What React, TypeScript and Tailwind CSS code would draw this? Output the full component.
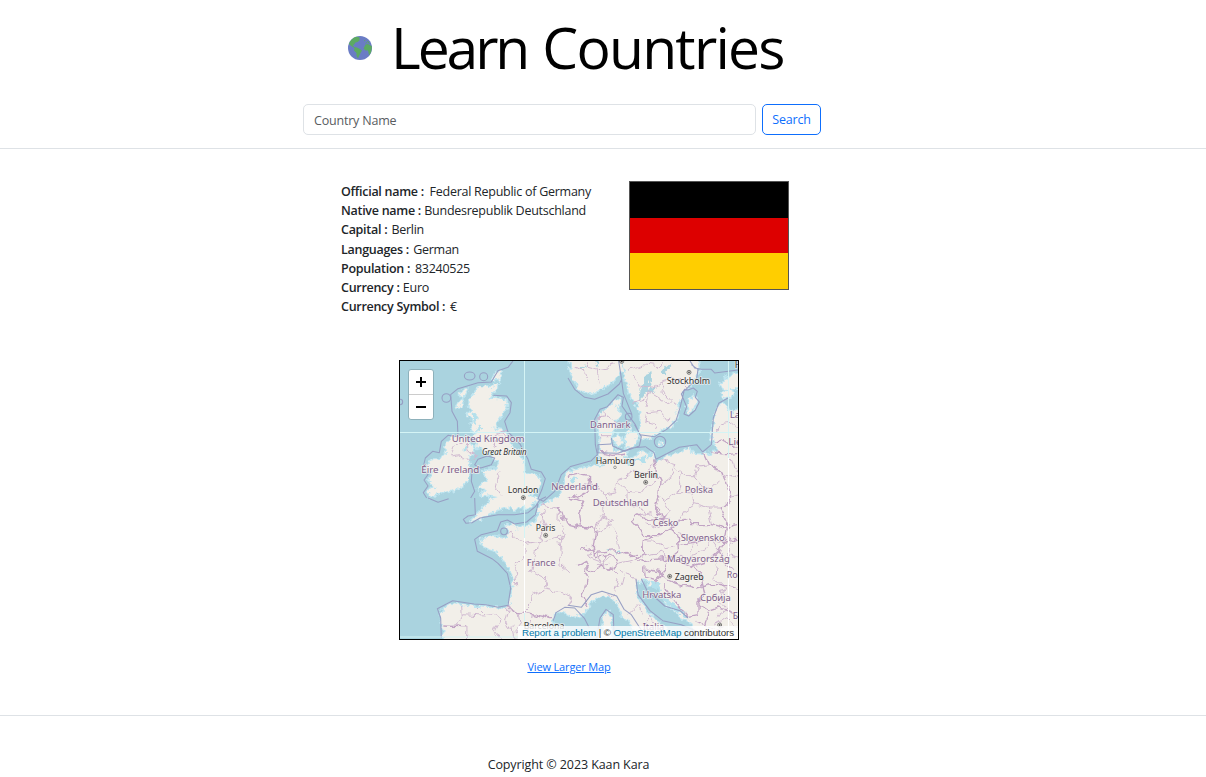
import React from "react";

const facts: [string, string, string][] = [
  ["Official name :", "Federal Republic of Germany", "w-[250px]"],
  ["Native name :", "Bundesrepublik Deutschland", "w-[245px]"],
  ["Capital :", "Berlin", "w-[83px]"],
  ["Languages :", "German", "w-[118px]"],
  ["Population :", "83240525", "w-[129px]"],
  ["Currency :", "Euro", "w-[88px]"],
  ["Currency Symbol :", "€", "w-[116px]"],
];

function Globe() {
  return (
    <svg viewBox="0 0 24 24" className="h-6 w-6 shrink-0">
      <circle cx="12" cy="12" r="12" fill="#6a7cc5" />
      <path
        fill="#5caa62"
        d="M.8 8Q3 2.500 8 .8L11.500 1.200L11.500 4.500L9.500 6L7.500 6.500L6.200 8.500L5 9L6 11L9 11.500L12 13L14 14.500L12.500 17L11 20L10 22.500L8.500 20L8.500 17L6 14.500L6.500 12L4 10.500L2 9ZM17.500 8.500L20 8L21.500 9L23.700 10Q24.500 15 21.200 19.500L20.500 17L20 14.500L17.500 14.500L15.500 12.500ZM19 5L20.500 5.500L22 8L20 7Z"
      />
      <path stroke="#5caa62" strokeWidth=".8" fill="none" d="M16 5L17.500 4M17.500 7.300L19 6.500" />
    </svg>
  );
}

const land = [
  // Great Britain
  "M242 84L268 88L300 78L290 98L270 125L292 122L326 128L326 148L310 172L288 204L286 212L312 216L325 235L338 262L360 285L378 318L380 348L420 352L427 374L412 398L390 414L418 420L410 435L395 448L350 452L325 448L290 458L260 475L235 488L215 492L240 468L265 440L280 424L302 418L275 412L248 414L264 396L240 394L252 378L270 370L262 350L250 342L272 332L298 332L304 312L285 298L290 280L262 285L250 266L235 270L238 248L228 236L240 215L222 222L218 196L224 180L208 172L225 152L208 135L226 112Z",
  "M183 108L208 88L206 100L194 118ZM174 150L196 120L188 144ZM284 66L294 42L308 44L300 66Z",
  // Ireland
  "M162 240L200 236L216 262L228 272L222 292L212 300L214 330L208 368L180 392L130 404L98 418L86 404L110 385L94 366L108 345L86 335L96 310L130 302L144 288L142 262Z",
  // Continent
  "M606 272L604 230L600 186L608 166L630 150L665 118L656 150L668 170L652 190L652 215L636 235L640 262L654 278L684 284L696 304L738 278L748 290L768 286L766 318L800 298L852 284L872 270L890 288L922 290L960 282L956 262L940 248L948 190L954 160L976 132L996 165L1030 150L1030 850L904 850L880 796L840 770L800 735L780 675L750 685L758 664L730 668L712 678L716 710L750 766L790 800L840 850L745 850L700 800L672 772L658 732L640 720L612 712L584 726L560 764L528 776L494 758L468 768L464 795L410 850L138 850L136 810L124 765L160 736L200 742L260 746L320 750L334 744L342 700L346 655L330 626L312 596L290 578L260 568L246 546L290 534L322 540L332 528L328 500L345 498L352 512L390 506L416 488L424 446L450 430L482 420L494 394L506 360L510 342L560 330L606 318Z",
  // Scandinavia
  "M514 0L520 48L540 90L568 108L602 98L640 72L670 42L678 12L680 54L696 108L722 150L728 186L724 218L728 240L762 242L778 218L812 208L832 190L840 138L858 95L884 74L902 42L900 0Z",
  "M684 266L680 238L696 214L718 224L714 254L696 270ZM644 242L660 230L676 250L662 266ZM676 272L696 272L690 280ZM875 166L866 142L888 112L900 124L886 152ZM830 188L836 158L844 148L840 174ZM782 250L795 256L788 264ZM968 82L990 56L1030 46L1030 84L990 98ZM970 108L998 92L1008 108L980 122Z",
  // Corsica and Sardinia
  "M616 776L632 762L640 790L638 816L622 824L614 800ZM610 832L638 824L642 850L604 850Z",
];

const maritime = [
  "M86 420L76 404L90 384L78 366L90 350L74 334L82 300L104 280L124 284L130 250L150 232L180 236L178 190L162 160L158 110L180 92L240 74L280 72L300 38L330 28L345 9M286 112L326 114L340 134L336 164L320 190L330 222L366 258L390 304L400 334L430 342L442 362L432 394L420 422L436 430L470 400L490 350L515 328",
  "M90 420L120 433L152 422M230 420L232 470L210 474L196 484L204 496L222 494L246 480L300 470L350 470L390 464L412 446L425 426L444 416M240 330L222 340L220 370L230 400L218 420M230 320L240 304L268 294L290 300L280 320L248 330Z",
  "M515 326L580 308L598 290L592 260L590 184L606 154L628 146L660 110L676 118L672 144L696 178L712 200L726 230L770 236L806 214L834 188L846 150L858 100L896 62L900 34L880 20M662 9L670 60L676 106L702 170",
  "M510 60L530 94L560 118L590 124L630 108L664 78L670 66M876 9L890 30L910 34L940 34L950 45L1020 36M710 200L730 236L724 264L680 280L644 264L640 240M640 258L600 260L600 284L660 286L700 270L742 266L768 284L774 304L844 268L896 260L914 282L940 260L946 180L962 136L990 120",
  "M850 108L860 94L870 96L886 90L898 100L892 118L904 132L892 156L872 174L858 168L866 146L860 132Z",
  "M420 438L412 470L386 492L350 498L328 486L308 492L298 518L250 530L230 544L238 580L282 602L300 616L328 646L338 690L330 742L300 748L264 740L228 738L164 728L118 752L128 780L130 840",
  "M510 742L550 748L580 710L612 700L656 714L678 754L700 770L744 838M714 664L720 710L756 758L794 788L850 800L896 820M730 662L748 700L780 726L800 744L846 758L870 780M466 788L474 764L500 748L530 750L560 782L574 810",
  "M596 840L606 780L624 754L646 770L648 830",
];

const regions = [
  "M158 294L170 268L202 250L204 278L226 278L230 300L202 304L182 290L158 294M278 240L320 222L310 246L282 262M300 340L292 350L302 370L296 396L306 412",
  "M600 180L630 174L658 190M618 162L620 178M606 236L642 236",
  "M426 440L460 446L482 450M444 456L430 480L442 512L424 552L382 560L350 546L340 520L326 530M482 450L480 492L504 510L484 540L448 548L422 542M382 560L380 600L350 624L356 680M422 552L400 640L440 660L440 696L402 714L400 734L380 754M484 540L490 580L482 622L510 644M446 660L440 692L480 700L520 716L506 748",
  "M188 744L190 780L170 800L204 808L202 850M238 748L260 770L290 766L300 790L286 820L310 850M330 748L320 786L340 800L350 850M360 762L366 800L350 820M190 770L260 774M400 768L394 800L380 850",
  "M580 580L574 600L600 610L636 600M660 620L700 610L728 600M640 640L660 660L650 700L630 712M660 640L700 648L716 668M678 650L670 680L650 690M690 770L720 740L730 766M740 805L760 780L780 810M576 590L610 606M604 584L606 620M620 590L620 630M590 620L640 616",
  "M706 54L720 80L760 90L800 70L840 60L870 90M690 40L740 20L780 26L800 9M706 130L740 120L760 106L800 130L830 140M740 194L746 164L782 160L800 184L820 180M754 100L744 150M800 70L792 100L816 128M740 186L770 194L780 216M530 28L558 36L568 70M560 9L570 28L600 36L630 30L646 9M600 36L606 76",
  "M534 392L560 380L600 384L620 408L650 402L660 368L680 360L704 340L746 342L770 326M620 408L630 440L610 470L592 520M660 370L690 400L690 430L650 440L620 430M690 400L730 404L746 380L774 370M690 430L720 440L740 470M592 520L630 504L650 520L664 570M610 470L640 490L630 504",
  "M790 306L830 320L850 350L890 350L900 324L930 320M834 320L816 360L784 384M850 350L840 404L800 430L782 414M840 404L880 404L904 380L890 350M904 380L940 390L966 364M880 404L890 440L860 460L840 490M890 440L930 450L970 450M930 450L940 500M800 430L820 460L798 480",
  "M724 470L760 464L782 486L820 484M746 500L780 510L808 490M730 552L770 552L800 570L830 564M740 590L780 580L810 600M840 530L880 540L900 560M850 600L890 590L920 580M880 560L876 606M930 550L920 580M1000 552L986 590L1020 600M942 550L960 574",
  "M958 230L970 200L1010 194L1030 210M1000 300L1010 340L1030 350M980 350L1030 364M990 420L1030 410M960 620L950 660L980 690L964 726L980 750L960 780M950 800L990 776L1020 810M920 800L950 820L980 812",
];

const nations = [
  "M606 286L650 292L680 288M510 356L540 348L575 356L570 402L540 420L520 410L500 415M510 420L560 430L545 464L550 500L580 512L592 522L586 566L590 584L630 580L660 578L690 590L720 586M482 450L490 480L520 500L536 504L580 512",
  "M770 304L776 350L786 370L782 414L770 450L798 480L750 488L716 470L700 484L742 530L764 540L730 552L728 576L740 592L720 602L690 584",
  "M740 530L790 530L820 510L846 490L870 480L884 500L940 500L980 510L1020 500M820 512L838 540L842 582L820 600L770 604L720 610M842 560L890 552L944 544L984 552L1010 540",
  "M914 286L930 320L980 350L1000 420L970 450L990 490L984 540L964 574L924 612L880 626L842 610L838 596M742 630L778 638L800 660L840 676L890 690M810 610L800 640L770 668L742 660L740 634M890 626L910 660L920 710L900 732L900 770L870 776L820 720L796 682M964 574L980 610L1010 638M900 690L940 680L990 680L1020 690",
  "M334 748L356 760L400 766L420 772L460 780M130 804L200 806M550 580L586 570L590 596L630 590L650 598L660 620L630 640L610 620L590 640L566 628L560 610L540 622M560 628L570 656L562 690L550 720L570 750",
  "M946 250L970 240L1000 262L1030 260M940 282L980 290L1030 286M900 740L930 760L960 750L1010 768M930 760L920 800L890 790",
];

const lakes =
  "M728 92L738 70L758 74L752 92L770 88L768 100L738 108L722 130ZM744 46L760 40L762 68L742 80L736 60ZM790 40L806 20L820 24L800 46ZM594 9L600 30L605 9ZM548 30L562 22L554 42ZM664 576L654 584L668 586ZM626 576L646 580L628 584Z";

type Label = { t: string; x: number; y: number; w: number; city?: boolean; italic?: boolean };
const labels: Label[] = [
  { t: "United Kingdom", x: 161, y: 252, w: 218 },
  { t: "Great Britain", x: 252, y: 290, w: 134, city: true, italic: true },
  { t: "Éire / Ireland", x: 70, y: 344, w: 174 },
  { t: "London", x: 329, y: 404, w: 92, city: true },
  { t: "Nederland", x: 460, y: 397, w: 139 },
  { t: "Stockholm", x: 806, y: 77, w: 130, city: true },
  { t: "Danmark", x: 576, y: 211, w: 121 },
  { t: "Hamburg", x: 593, y: 318, w: 117, city: true },
  { t: "Berlin", x: 708, y: 360, w: 72, city: true },
  { t: "Polska", x: 860, y: 406, w: 85 },
  { t: "Deutschland", x: 584, y: 443, w: 168 },
  { t: "Paris", x: 413, y: 518, w: 59, city: true },
  { t: "France", x: 386, y: 625, w: 86 },
  { t: "Česko", x: 764, y: 505, w: 77 },
  { t: "Slovensko", x: 848, y: 550, w: 132 },
  { t: "Magyarország", x: 807, y: 612, w: 188 },
  { t: "Zagreb", x: 830, y: 666, w: 87, city: true },
  { t: "Hrvatska", x: 733, y: 721, w: 117 },
  { t: "Србија", x: 906, y: 729, w: 92 },
  { t: "Barcelona", x: 377, y: 812, w: 122, city: true },
  { t: "Italia", x: 734, y: 817, w: 65 },
  { t: "România", x: 986, y: 660, w: 110 },
  { t: "Latvija", x: 995, y: 181, w: 90 },
  { t: "Lietuva", x: 991, y: 260, w: 100 },
  { t: "България", x: 1004, y: 783, w: 120 },
  { t: "Helsinki", x: 1010, y: 29, w: 100, city: true },
];

const capitals = [
  [376, 419], [873, 43], [743, 373], [443, 532], [815, 655], [671, 10], [965, 801],
];

function EuropeMap() {
  return (
    <svg viewBox="6 9 1014 834" className="block h-[278px] w-[338px] bg-[#aad3df]">
      <defs>
        <filter id="rough" x="0" y="0" width="100%" height="100%" colorInterpolationFilters="sRGB">
          <feTurbulence type="fractalNoise" baseFrequency="0.07" numOctaves="3" seed="4" result="n" />
          <feDisplacementMap in="SourceGraphic" in2="n" scale="22" xChannelSelector="R" yChannelSelector="G" />
        </filter>
        <filter id="wavy" x="0" y="0" width="100%" height="100%" colorInterpolationFilters="sRGB">
          <feTurbulence type="fractalNoise" baseFrequency="0.035" numOctaves="2" seed="9" result="n" />
          <feDisplacementMap in="SourceGraphic" in2="n" scale="30" xChannelSelector="R" yChannelSelector="G" />
        </filter>
      </defs>
      <g filter="url(#rough)">
        <path d={land.join("")} fill="#f2efe9" stroke="#bfe5f0" strokeWidth="8" strokeLinejoin="round" />
        <path d={land.join("")} fill="#f2efe9" />
        <path
          fill="#b4e0ec"
          d="M224 158L240 178L232 200L226 190ZM240 198L252 214L236 220ZM200 262L212 272L200 278ZM610 310L622 324L604 330ZM680 290L700 308L744 294L746 316L720 310L690 318ZM740 280L752 300L764 290ZM820 202L840 150L826 188ZM756 666L780 674L790 700L765 690ZM784 700L820 734L850 752L876 786L830 760L790 724ZM524 352L538 362L524 374L516 362Z"
        />
        <path d={lakes} fill="#aad3df" />
      </g>
      <g filter="url(#wavy)" fill="none" strokeLinejoin="round">
        <path d={regions.join("")} stroke="#cfb8d0" strokeWidth="3" />
        <path d={nations.join("")} stroke="#c1a3c4" strokeWidth="4" />
      </g>
      <g fill="none" stroke="#979fc4" strokeWidth="3.2" strokeLinejoin="round">
        <path d={maritime.join("")} />
        <ellipse cx="215" cy="54" rx="16" ry="12" />
        <circle cx="257" cy="56" r="12" />
        <circle cx="145" cy="120" r="13" />
        <circle cx="6" cy="132" r="8" />
        <circle cx="318" cy="520" r="10" />
        <circle cx="786" cy="252" r="17" />
        <circle cx="692" cy="176" r="10" />
      </g>
      <path d="M379.500 9V843M991.500 9V843M6 223.500H1020M6 837H379" stroke="#d4f4f5" strokeWidth="3" />
      <path d="M379.500 415V440M379.500 540V765M991.500 300V843" stroke="#fff" strokeWidth="3" />
      <g fill="#f2efe9" stroke="#444" strokeWidth="2">
        {capitals.map(([x, y]) => (
          <g key={x}>
            <circle cx={x} cy={y} r="6" />
            <circle cx={x} cy={y} r="2" fill="#444" />
          </g>
        ))}
        <circle cx="651" cy="328" r="4" stroke="#777" />
      </g>
      <g strokeLinejoin="round" paintOrder="stroke" stroke="#f6f4f1" strokeOpacity=".75" strokeWidth="5">
        {labels.map((l) => (
          <text
            key={l.t}
            x={l.x}
            y={l.y}
            textLength={l.w}
            lengthAdjust="spacingAndGlyphs"
            fontFamily="Noto Sans, sans-serif"
            fontSize={l.italic ? 24 : 27}
            fontStyle={l.italic ? "italic" : "normal"}
            fill={l.city ? "#333" : "#805f8b"}
          >
            {l.t}
          </text>
        ))}
      </g>
    </svg>
  );
}

function Fit({ children, className }: { children: React.ReactNode; className: string }) {
  return <div className={`flex justify-between whitespace-pre ${className}`}>{children}</div>;
}

export default function App() {
  return (
    <div className="h-[777px] overflow-hidden bg-white font-['Open_Sans','Noto_Sans',sans-serif] text-[12.5px] tracking-[-0.2px] text-[#212529]">
      <header className="flex h-[149px] flex-col border-b border-[#dee2e6]">
        <div className="flex h-[104px] items-start pl-[348px]">
          <div className="pt-9">
            <Globe />
          </div>
          <h1 className="ml-[19px] pt-[7px] text-[57px] leading-[80px] tracking-[-1.75px] whitespace-nowrap text-black">
            <span className="mr-[2px] tracking-[-3.1px]">Learn</span> Countries
          </h1>
        </div>
        <form className="flex gap-[6px] pl-[303px]">
          <input
            className="h-[31px] w-[453px] rounded-[5px] border border-[#dee2e6] px-[10px] pt-px placeholder:text-[#595c5f]"
            placeholder="Country Name"
          />
          <button
            type="button"
            className="flex h-[31px] w-[59px] items-center justify-center rounded-[5px] border border-[#0d6efd] pt-[2px] text-[#0d6efd]"
          >
            Search
          </button>
        </form>
      </header>

      <main className="flex h-[567px] flex-col border-b border-[#dee2e6] pt-8">
        <section className="flex h-[179px] pl-[341px]">
          <dl className="w-[288px] pt-px">
            {facts.map(([k, v, w]) => (
              <div key={k} className="h-[19.2px] leading-[19.2px]">
                <Fit className={w}>
                  <dt className="font-semibold tracking-[-0.28px]">{k}</dt>
                  <dd className="tracking-[-0.26px]">{v}</dd>
                </Fit>
              </div>
            ))}
          </dl>
          <div className="flex h-[109px] w-40 flex-col border border-[#555]">
            <div className="flex-1 bg-black" />
            <div className="flex-1 bg-[#dd0000]" />
            <div className="flex-1 bg-[#ffce00]" />
          </div>
        </section>
        <section className="flex w-[1138px] flex-col items-center">
          <div className="relative h-[280px] w-[340px] overflow-hidden border border-black">
            <EuropeMap />
            <div className="absolute top-2 left-2 flex h-[51px] w-[26px] flex-col rounded-[3px] border border-[#8eb1bb] bg-white">
              <button type="button" aria-label="Zoom in" className="flex h-[25px] items-center justify-center border-b border-[#ccc]">
                <svg viewBox="0 0 10 10" className="h-[10px] w-[10px]"><path d="M0 5H10M5 0V10" stroke="#000" strokeWidth="2" /></svg>
              </button>
              <button type="button" aria-label="Zoom out" className="flex h-6 items-center justify-center">
                <svg viewBox="0 0 10 10" className="h-[10px] w-[10px]"><path d="M0 5H10" stroke="#000" strokeWidth="2" /></svg>
              </button>
            </div>
            <div className="absolute right-0 bottom-0 flex h-[13px] w-[220px] items-center justify-center bg-white/80 pt-px font-['Liberation_Sans',sans-serif] text-[9.75px] tracking-[-0.08px] whitespace-pre text-[#333]">
              <a className="text-[#0078a8]">Report a problem</a> | © <a className="text-[#0078a8]">OpenStreetMap</a> contributors
            </div>
          </div>
          <a className="mt-[19px] text-[11px] leading-4 tracking-[-0.15px] text-[#0d6efd] underline">View Larger Map</a>
        </section>
      </main>

      <footer className="w-[1137px] pt-[39px] text-center leading-5 tracking-[-0.1px]">Copyright © 2023 Kaan Kara</footer>
    </div>
  );
}
